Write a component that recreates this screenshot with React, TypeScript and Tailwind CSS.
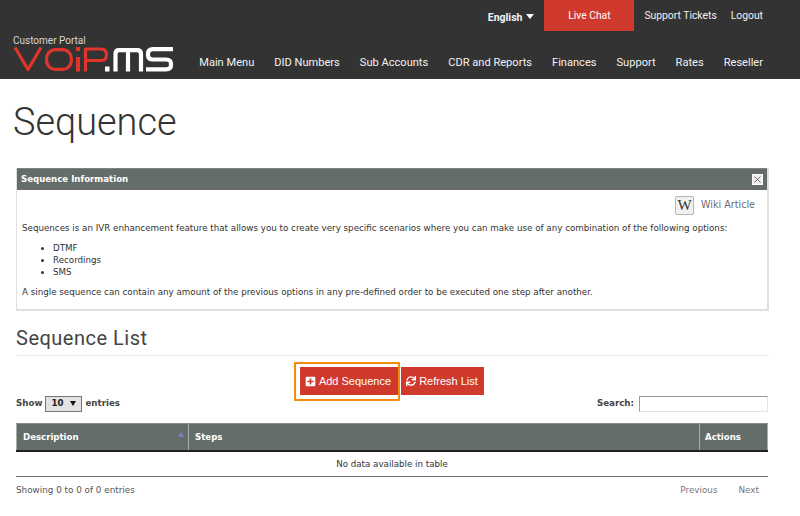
import { FaPlusSquare, FaSync } from "react-icons/fa";

const navItems = ["Main Menu", "DID Numbers", "Sub Accounts", "CDR and Reports", "Finances", "Support", "Rates", "Reseller"];

function Logo() {
  return (
    <svg width="162" height="25" viewBox="0 0 162 25" fill="none" className="block">
      <g stroke="#e0352b" strokeWidth="3.2" strokeLinejoin="round">
        <path d="M2 0.500 L15 22.500 L28 0.500" />
        <rect x="33.600" y="2.600" width="24.800" height="19.800" rx="9" />
        <path d="M72.500 24.500 V2 H88 Q93.500 2 93.500 7.500 V8 Q93.500 13.500 88 13.500 H73" />
      </g>
      <rect x="63" y="0" width="4" height="4" fill="#e0352b" />
      <rect x="63" y="10" width="4" height="14.500" fill="#e0352b" />
      <rect x="92" y="19.500" width="4.500" height="5" fill="#fff" />
      <g stroke="#fff" strokeWidth="4.200">
        <path d="M102.500 24.500 V7 Q102.500 3.200 106 3.200 H124 Q128 3.200 128 7 V24.500" />
        <path d="M115 3.200 V24.500" />
        <path d="M160 2.200 H140 Q135 2.200 135 7 V8 Q135 12.500 140 12.500 H153 Q158 12.500 158 17 V18 Q158 22.300 153 22.300 H133" />
      </g>
    </svg>
  );
}

function Header() {
  return (
    <header className="bg-[#333333] h-[79px] font-['Roboto',sans-serif] text-[#f2f2f2]">
      <div className="flex justify-end items-start h-[31px] pr-[37px]">
        <div className="flex items-center gap-[4px] mt-[11px] mr-[10px] text-[10.500px] leading-[14px] font-bold">
          English
          <span className="w-0 h-0 mb-[3px] border-x-[4px] border-x-transparent border-t-[5px] border-t-white" />
        </div>
        <div className="w-[90px] h-[31px] bg-[#cf3a2d] text-white flex items-center justify-center text-[10.300px]">Live Chat</div>
        <div className="ml-[10px] mt-[9px] text-[10.350px] leading-[14px] whitespace-nowrap">Support Tickets</div>
        <div className="ml-[14px] mt-[9px] text-[10.350px] leading-[14px]">Logout</div>
      </div>
      <div className="flex items-start justify-between pl-[13px] pr-[37px]">
        <div className="mt-[4px]">
          <div className="text-[10px] leading-[11px] text-[#d8d8d8] mb-[1px]">Customer Portal</div>
          <Logo />
        </div>
        <nav className="flex gap-[20px] mt-[24px] text-[11.080px] leading-[15px] whitespace-nowrap">
          {navItems.map((n) => (
            <span key={n}>{n}</span>
          ))}
        </nav>
      </div>
    </header>
  );
}

function InfoPanel() {
  return (
    <section className="mx-[16px] w-[753px] h-[143px] border border-[#dfdfdf] border-t-0 border-r-2 border-b-2">
      <div className="h-[22px] bg-[#656d6b] border-t border-[#7d8482] flex items-center justify-between pl-[4px] pr-[4px] text-white">
        <span className="text-[8.600px] font-bold">Sequence Information</span>
        <span className="w-[11px] h-[11px] bg-[#eeeeee] border border-white flex items-center justify-center">
          <svg width="7" height="7" viewBox="0 0 7 7" stroke="#555" strokeWidth="0.800"><path d="M0.500 0.500 L6.500 6.500 M6.500 0.500 L0.500 6.500" /></svg>
        </span>
      </div>
      <div className="flex justify-end items-center pr-[12px] mt-[5px] h-[20px] gap-[7px]">
        <span className="w-[19px] h-[19px] rounded-[2px] border border-[#b5b5b5] bg-[#f1f1f1] flex items-center justify-center font-['Liberation_Serif',serif] text-[15px] leading-none text-[#333]">W</span>
        <span className="text-[9.600px] text-[#6d6d74]">Wiki Article</span>
      </div>
      <div className="px-[5px] text-[8.720px] leading-[12px] text-[#333]">
        <p className="mt-[7px]">Sequences is an IVR enhancement feature that allows you to create very specific scenarios where you can make use of any combination of the following options:</p>
        <ul className="mt-[8px] pl-[31px] list-disc">
          <li>DTMF</li>
          <li>Recordings</li>
          <li>SMS</li>
        </ul>
        <p className="mt-[8px]">A single sequence can contain any amount of the previous options in any pre-defined order to be executed one step after another.</p>
      </div>
    </section>
  );
}

function Table() {
  return (
    <div className="mx-[16px] w-[752px]">
      <div className="flex h-[29px] bg-[#656d6b] text-white text-[8.600px] font-bold border-b-2 border-[#222] border-t border-t-[#8a908e]">
        <div className="w-[173px] border-x border-[#a9aeac] pl-[6px] pt-[1px] flex items-center relative">
          Description
          <span className="absolute right-[4px] top-[8px] w-0 h-0 border-x-[3.500px] border-x-transparent border-b-[5px] border-b-[#7f7fd0]" />
        </div>
        <div className="flex-1 pl-[6px] pt-[1px] flex items-center">Steps</div>
        <div className="w-[69px] border-x border-[#a9aeac] pl-[5px] pt-[1px] flex items-center">Actions</div>
      </div>
      <div className="h-[25px] pt-[1px] flex items-center justify-center text-[8.700px] text-[#333] border-b border-[#777]">No data available in table</div>
    </div>
  );
}

export default function App() {
  return (
    <div className="w-[800px] h-[516px] overflow-hidden bg-white font-['DejaVu_Sans',sans-serif]">
      <Header />
      <h1 className="pl-[13px] pt-[20px] h-[89px] font-['Roboto',sans-serif] font-light text-[37.900px] leading-[46px] text-[#333]">Sequence</h1>
      <InfoPanel />
      <div className="mx-[16px] mt-[15px] h-[30px] w-[753px] border-b border-[#eeeeee] font-['Roboto',sans-serif] text-[20px] leading-[24px] tracking-[0.5px] text-[#444]">Sequence List</div>
      <div className="flex justify-center gap-[2px] mt-[11px] pr-[16px] font-['Liberation_Sans',sans-serif] text-[11px] text-white">
        <div className="relative">
          <button className="h-[28px] w-[99px] pr-[3px] bg-[#cf3a2d] flex items-center justify-center gap-[3px]">
            <FaPlusSquare size={11} />
            Add Sequence
          </button>
          <div className="absolute left-[-6px] top-[-5px] w-[106px] h-[39px] border-2 border-[#f58a0c] rounded-[1px]" />
        </div>
        <button className="h-[28px] w-[83px] pr-[1px] bg-[#cf3a2d] flex items-center justify-center gap-[3px]">
          <FaSync size={10} />
          Refresh List
        </button>
      </div>
      <div className="mx-[16px] w-[752px] h-[28px] flex items-start justify-between text-[8.700px] font-bold text-[#444]">
        <div className="flex items-center gap-[3px] h-[16px] pt-[1px]">
          Show
          <span className="w-[37px] h-[16px] bg-[#e2e2e2] border border-[#767676] flex items-center justify-between px-[5px] text-[#222]">
            10
            <span className="w-0 h-0 border-x-[3px] border-x-transparent border-t-[5px] border-t-[#111]" />
          </span>
          entries
        </div>
        <div className="flex items-center gap-[5px] h-[16px] pt-[1px]">
          Search:
          <input className="w-[129px] h-[16px] border border-[#e4e4e4] border-t-[#999] border-l-[#999] bg-white" />
        </div>
      </div>
      <Table />
      <div className="mx-[16px] w-[752px] mt-[7px] flex justify-between text-[8.800px] leading-[12px] text-[#555]">
        <span>Showing 0 to 0 of 0 entries</span>
        <span className="flex gap-[21px] pr-[9px] text-[#777]">
          <span>Previous</span>
          <span>Next</span>
        </span>
      </div>
    </div>
  );
}
